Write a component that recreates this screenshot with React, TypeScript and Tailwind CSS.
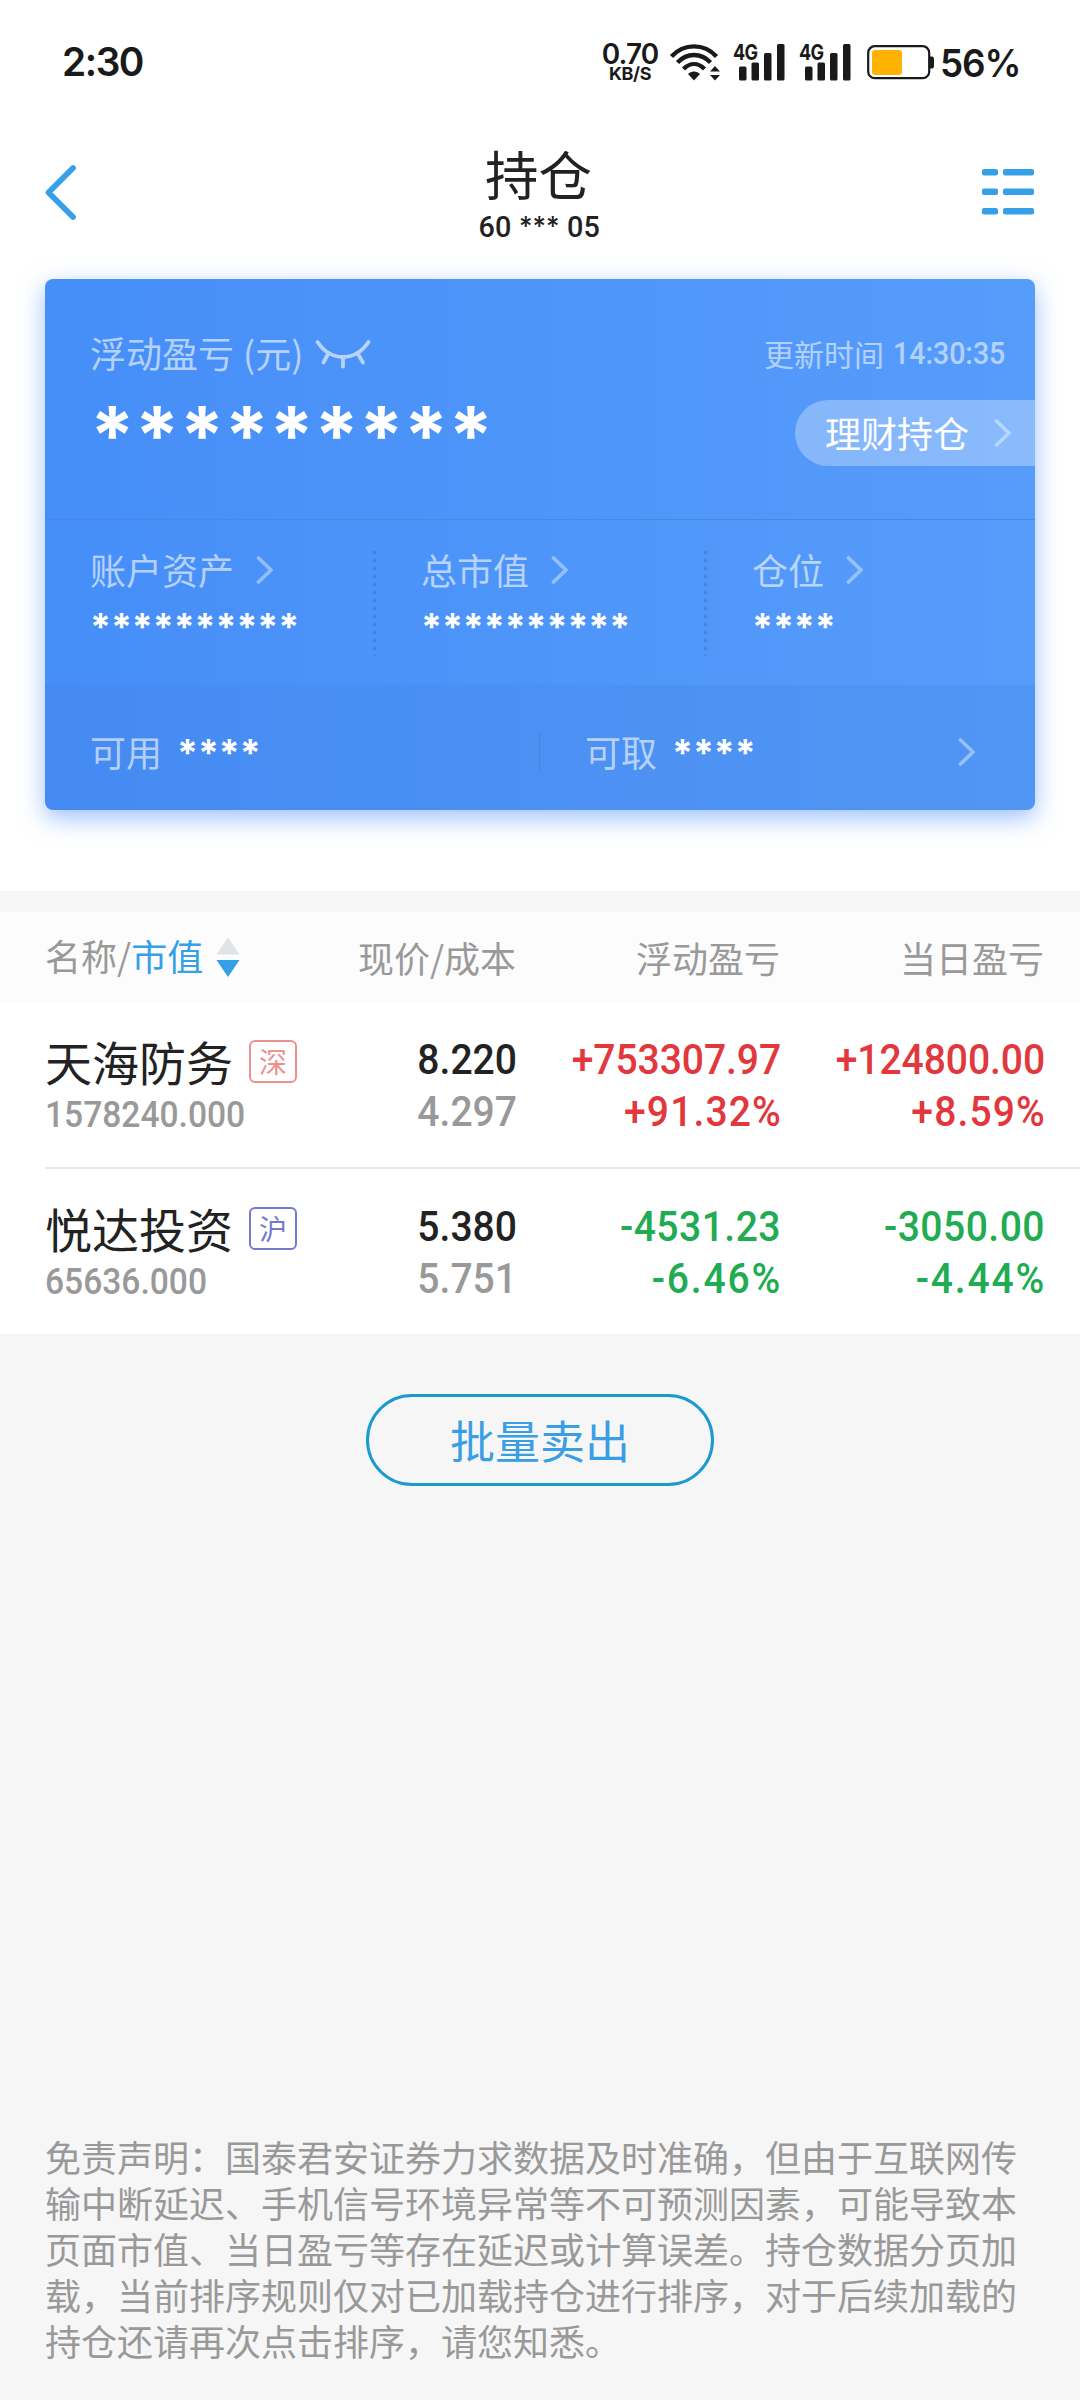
import React from "react";

const CJK = "font-['Noto_Sans_CJK_SC',sans-serif]";
const NUM = "font-['Roboto',sans-serif] font-medium";
const STAR = "font-['Inter',sans-serif]";

function Chevron({ className = "" }: { className?: string }) {
  return (
    <svg className={`h-[30px] w-[18px] shrink-0 ${className}`} viewBox="0 0 18 30" fill="none">
      <path d="M2.5 3L15 15L2.5 27" stroke="#fff" strokeWidth="3.8" strokeLinecap="round" strokeLinejoin="round" />
    </svg>
  );
}

function Signal() {
  return (
    <div className="relative h-[37px] w-[52px]">
      <span className="absolute -top-[2px] left-0 origin-left scale-x-[0.82] font-['Inter',sans-serif] text-[22px] leading-[20px] font-bold tracking-[-0.8px]">
        4G
      </span>
      <svg className="absolute inset-0" width="52" height="37" viewBox="0 0 52 37" fill="#1a1a1a">
        <rect x="6" y="22.5" width="7.5" height="14" rx="1.5" />
        <rect x="18.5" y="18.5" width="7.5" height="18" rx="1.5" />
        <rect x="31" y="9" width="7.5" height="27.5" rx="1.5" />
        <rect x="44" y="0" width="7.5" height="36.5" rx="1.5" />
      </svg>
    </div>
  );
}

function StatusBar() {
  return (
    <div className="flex h-[124px] items-center justify-between pr-[60px] pl-[62px] text-[#1a1a1a]">
      <span className="origin-left scale-x-[0.97] font-['Inter',sans-serif] text-[40px] leading-[40px] font-semibold tracking-[-1.5px]">2:30</span>
      <div className="flex items-center">
        <div className="mr-[4px] flex w-[58px] flex-col items-center font-['Inter',sans-serif] font-semibold">
          <span className="text-[28px] leading-[22px] tracking-[-0.9px]">0.70</span>
          <span className="mt-[1px] text-[18px] leading-[15px] font-bold tracking-[-0.4px]">KB/S</span>
        </div>
        <svg className="ml-[6px]" width="52" height="37" viewBox="0 0 52 37" fill="none" stroke="#1a1a1a">
          <path d="M2.5 12.5C15 -1 35 -1 47.500 12.5" strokeWidth="4.4" />
          <path d="M8.500 18.500C18 8.500 32 8.500 41.500 18.500" strokeWidth="4.400" />
          <path d="M14.500 25C21 18.500 29 18.500 35.500 25" strokeWidth="4.400" />
          <path d="M19 30C22 26.500 28 26.500 31 30L25 36.500Z" fill="#1a1a1a" stroke="none" />
          <path d="M41 27.500L46 22L51 27.500ZM41 31L46 36.500L51 31Z" fill="#1a1a1a" stroke="none" />
        </svg>
        <div className="ml-[12px]"><Signal /></div>
        <div className="ml-[14px]"><Signal /></div>
        <svg className="ml-[16px]" width="68" height="35" viewBox="0 0 68 35" fill="none">
          <rect x="1.200" y="1.200" width="61" height="32" rx="6.500" stroke="#1a1a1a" strokeWidth="2.200" />
          <rect x="5" y="5" width="30" height="25" rx="3" fill="#ffb300" />
          <path d="M63 11.500H65.500Q67 12 67 14V21Q67 23 65.500 23.500H63Z" fill="#1a1a1a" />
        </svg>
        <span className="mt-[1px] ml-[5px] w-[80px] origin-left scale-x-[0.97] font-['Inter',sans-serif] text-[38px] leading-[38px] font-semibold tracking-[-1.2px]">56%</span>
      </div>
    </div>
  );
}

function TitleBar() {
  return (
    <div className="flex h-[155px] items-start justify-between px-[45px]">
      <svg className="mt-[40px]" width="52" height="58" viewBox="0 0 52 58" fill="none">
        <path d="M28 4L3.500 28.500L28 53" stroke="#359fe8" strokeWidth="5.800" strokeLinecap="round" strokeLinejoin="round" />
      </svg>
      <div className="flex flex-col items-center text-[#222]">
        <h1 className={`${CJK} mt-[19px] mr-[2px] text-[53.500px] leading-[60px] font-normal`}>持仓</h1>
        <div className={`${NUM} mt-[9px] flex origin-center scale-x-[0.96] items-center text-[30px] leading-[30px]`}>
          <span>60</span>
          <span className={`${STAR} mx-[8px] text-[27px]`}>***</span>
          <span>05</span>
        </div>
      </div>
      <svg className="mt-[44px] mr-px" width="52" height="48" viewBox="0 0 52 48" fill="#359fe8">
        {[1, 20.5, 40].map((y) => (
          <g key={y}>
            <rect x="0" y={y} width="16" height="6.500" rx="2" />
            <rect x="21" y={y} width="31" height="6.500" rx="2" />
          </g>
        ))}
      </svg>
    </div>
  );
}

const MASK = `${STAR} block text-[37.5px] leading-[34px] font-bold tracking-[-0.05px] text-white`;

function Stat({ label, mask }: { label: string; mask: string }) {
  return (
    <div className="pt-[31px]">
      <div className="flex h-[36px] items-center">
        <span className={`${CJK} text-[36px] leading-[36px] text-white/60`}>{label}</span>
        <Chevron className="mt-[2px] ml-[22px] opacity-40" />
      </div>
      <span className={`${MASK} mt-[23px]`}>{mask}</span>
    </div>
  );
}

function Dots() {
  return (
    <div className="mt-[31px] h-[105px] w-[3px] bg-[repeating-linear-gradient(to_bottom,rgba(0,40,120,0.16)_0px,rgba(0,40,120,0.16)_3px,transparent_3px,transparent_8px)]" />
  );
}

function AssetCard() {
  return (
    <section className="mx-[45px] h-[531px] overflow-visible rounded-[8px] bg-linear-to-r from-[#468ef8] to-[#569cfb] shadow-[0_8px_24px_rgba(74,140,255,0.55)]">
      <div className="flex h-[240px] justify-between pl-[45px]">
        <div>
          <div className={`${CJK} mt-[55px] flex h-[36px] items-center text-[36px] leading-[36px] text-white/60`}>
            <span>浮动盈亏</span>
            <span className="ml-[9px]">(</span>
            <span>元</span>
            <span>)</span>
            <svg className="mt-[4px] ml-[12px] opacity-60" width="56" height="30" viewBox="0 0 56 30" fill="none" stroke="#fff" strokeWidth="3.800" strokeLinecap="round">
              <path d="M2.500 3C16 23 40 23 53.500 3" />
              <path d="M13 15L8.500 23.500M28 18.500V27.500M43 15L48 23.500" />
            </svg>
          </div>
          <span className={`${STAR} mt-[29px] block text-[80px] leading-[72px] font-bold tracking-[0.1px] text-white`}>*********</span>
        </div>
        <div className="flex flex-col items-end">
          <div className="mt-[58px] mr-[31px] flex h-[33px] items-center text-white/55">
            <span className={`${CJK} text-[30px] leading-[33px]`}>更新时间</span>
            <span className={`${NUM} ml-[9px] w-[111px] origin-left scale-x-[0.92] text-[31px] leading-[33px]`}>14:30:35</span>
          </div>
          <div className="mt-[30px] flex h-[66px] w-[240px] items-center rounded-l-full bg-white/30 pl-[30px]">
            <span className={`${CJK} -mt-[2px] text-[36px] leading-[36px] text-white`}>理财持仓</span>
            <Chevron className="ml-[25px] opacity-40" />
          </div>
        </div>
      </div>
      <div className="flex h-[166px] border-t border-[#4a88e2]">
        <div className="w-[328px] pl-[45px]"><Stat label="账户资产" mask="**********" /></div>
        <Dots />
        <div className="w-[328px] pl-[45px]"><Stat label="总市值" mask="**********" /></div>
        <Dots />
        <div className="pl-[45px]"><Stat label="仓位" mask="****" /></div>
      </div>
      <div className="flex h-[125px] items-center rounded-b-[8px] bg-[#3a7ad0]/15 pt-[8px]">
        <div className="flex w-[494px] items-center pl-[45px]">
          <span className={`${CJK} -mt-[2px] text-[36px] leading-[36px] text-white/60`}>可用</span>
          <span className={`${MASK} mt-[2px] ml-[15px]`}>****</span>
        </div>
        <div className="h-[42px] w-px bg-[#3f7fd8]/60" />
        <div className="flex items-center pl-[45px]">
          <span className={`${CJK} -mt-[2px] text-[36px] leading-[36px] text-white/60`}>可取</span>
          <span className={`${MASK} mt-[2px] ml-[15px]`}>****</span>
        </div>
        <Chevron className="mr-[59px] ml-auto opacity-40" />
      </div>
    </section>
  );
}

const COLS = "grid grid-cols-[300px_171px_264px_264px] pl-[45px]";

function TableHead() {
  return (
    <div className={`${COLS} ${CJK} h-[90px] items-center bg-[#fcfcfc] pb-px text-[36px] leading-[36px] text-[#999]`}>
      <div className="flex items-center pb-[4px]">
        <span>名称/<span className="text-[#359fe8]">市值</span></span>
        <svg className="mt-[4px] ml-[13px]" width="24" height="42" viewBox="0 0 24 42">
          <path d="M12 1.500L23.500 18.500H0.500Z" fill="#e0e4e6" />
          <path d="M0.500 24H23.500L12 41Z" fill="#359fe8" />
        </svg>
      </div>
      <span className="text-right">现价/成本</span>
      <span className="text-right">浮动盈亏</span>
      <span className="text-right">当日盈亏</span>
    </div>
  );
}

type Holding = {
  name: string;
  market: string;
  badge: string;
  quantity: string;
  price: string;
  cost: string;
  profit: string[];
  today: string[];
  amountTone: string;
  percentTone: string;
};

const HOLDINGS: Holding[] = [
  {
    name: "天海防务",
    market: "深",
    badge: "border-[#ee8e8f] text-[#ee8e8f]",
    quantity: "1578240.000",
    price: "8.220",
    cost: "4.297",
    profit: ["+753307.97", "+91.32%"],
    today: ["+124800.00", "+8.59%"],
    amountTone: "text-[#e1373d] tracking-[-0.1px]",
    percentTone: "text-[#e1373d] -mr-[1px] tracking-[1.2px]",
  },
  {
    name: "悦达投资",
    market: "沪",
    badge: "border-[#7478cf] text-[#7478cf]",
    quantity: "65636.000",
    price: "5.380",
    cost: "5.751",
    profit: ["-4531.23", "-6.46%"],
    today: ["-3050.00", "-4.44%"],
    amountTone: "text-[#21ab52] tracking-[0.5px]",
    percentTone: "text-[#21ab52] -mr-[1px] tracking-[1.9px]",
  },
];

type PairProps = { top: string; bottom: string; topClass: string; bottomClass: string };

function Pair({ top, bottom, topClass, bottomClass }: PairProps) {
  return (
    <div className={`${NUM} -mr-px flex origin-right scale-x-[0.93] flex-col items-end pt-[32px] text-[42px] leading-[52px]`}>
      <span className={topClass}>{top}</span>
      <span className={bottomClass}>{bottom}</span>
    </div>
  );
}

function Row({ h }: { h: Holding }) {
  return (
    <div className={`${COLS} h-[165px]`}>
      <div>
        <div className="mt-[36px] flex h-[48px] items-center">
          <span className={`${CJK} -mt-[3px] text-[47px] leading-[48px] text-[#222]`}>{h.name}</span>
          <span className={`${CJK} -mt-px ml-[16px] flex h-[43px] w-[48px] items-center justify-center rounded-[6px] border-2 pb-[2px] text-[28px] leading-[28px] ${h.badge}`}>
            {h.market}
          </span>
        </div>
        <span className={`${NUM} mt-[9px] block origin-left scale-x-[0.92] text-[36.500px] leading-[40px] text-[#999]`}>{h.quantity}</span>
      </div>
      <Pair top={h.price} bottom={h.cost} topClass="text-[#222]" bottomClass="text-[#999]" />
      <Pair top={h.profit[0]} bottom={h.profit[1]} topClass={h.amountTone} bottomClass={h.percentTone} />
      <Pair top={h.today[0]} bottom={h.today[1]} topClass={h.amountTone} bottomClass={h.percentTone} />
    </div>
  );
}

const DISCLAIMER = [
  "免责声明：国泰君安证券力求数据及时准确，但由于互联网传",
  "输中断延迟、手机信号环境异常等不可预测因素，可能导致本",
  "页面市值、当日盈亏等存在延迟或计算误差。持仓数据分页加",
  "载，当前排序规则仅对已加载持仓进行排序，对于后续加载的",
  "持仓还请再次点击排序，请您知悉。",
];

export default function App() {
  return (
    <div className="flex h-[2400px] w-[1080px] flex-col overflow-hidden bg-[#f6f6f6]">
      <header className="h-[891px] bg-white">
        <StatusBar />
        <TitleBar />
        <AssetCard />
      </header>
      <main className="mt-[21px]">
        <TableHead />
        <div className="bg-white">
          <Row h={HOLDINGS[0]} />
          <div className="ml-[45px] h-[2px] bg-[#e6e6e6]" />
          <Row h={HOLDINGS[1]} />
        </div>
      </main>
      <button className={`${CJK} mx-auto mt-[60px] h-[92px] w-[348px] rounded-full border-[3px] border-[#1a9acd] pb-[2px] text-[45px] leading-[45px] text-[#3a9ee4]`}>
        批量卖出
      </button>
      <footer className={`${CJK} mt-auto mb-[37px] ml-[45px] text-[36px] leading-[46px] whitespace-nowrap text-[#999]`}>
        {DISCLAIMER.map((line) => (
          <p key={line}>{line}</p>
        ))}
      </footer>
    </div>
  );
}
